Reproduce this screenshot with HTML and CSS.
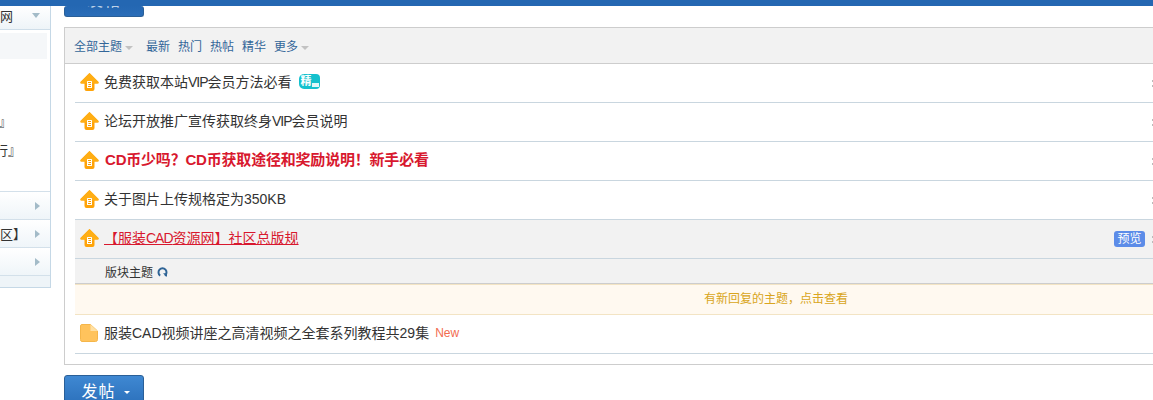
FILE: index.html
```html
<!DOCTYPE html>
<html lang="en">
<head>
  <meta charset="UTF-8">
  <title>服装CAD资源网</title>
  <link rel="stylesheet" href="styles.css">
</head>
<body>
  <svg class="defs" width="0" height="0">
    <symbol id="arrow" viewBox="0 0 19 18">
      <path d="M9.5 0 L18.5 9 Q19 10.5 17.5 10.5 L14.5 10.5 L14.5 16 Q14.5 18 12.5 18 L6.5 18 Q4.5 18 4.5 16 L4.5 10.5 L1.5 10.5 Q0 10.5 0.5 9 Z" fill="#ffa308"/>
      <path d="M9.5 0 L18.5 9 Q19 10.5 17.5 10.5 L1.5 10.5 Q0 10.5 0.5 9 Z" fill="#ffae14"/>
      <rect x="7" y="8" width="5" height="7" rx="0.5" fill="#fff"/>
      <path d="M8 9.5 H11 M8.5 11.5 H11 M8 13.5 H11" fill="none" stroke="#f59a00" stroke-width="1"/>
    </symbol>
  </svg>

  <div class="topbar"></div>

  <div class="page">
    <div class="sidebar">
      <div class="side-head"><span>网</span><i class="tri-down"></i></div>
      <div class="side-active"></div>
      <div class="side-links">
        <div class="side-link">』</div>
        <div class="side-link side-cut">行』</div>
      </div>
      <div class="side-group"><span></span><i class="tri-right"></i></div>
      <div class="side-group"><span>区】</span><i class="tri-right"></i></div>
      <div class="side-group"><span></span><i class="tri-right"></i></div>
      <div class="side-end"></div>
    </div>

    <div class="main">
      <a class="post-btn post-btn-top"><span>发帖</span></a>

      <div class="panel">
        <div class="filter">
          <div class="filter-links">
            <a class="first">全部主题<i class="tri-grey"></i></a>
            <a>最新</a>
            <a>热门</a>
            <a>热帖</a>
            <a>精华</a>
            <a>更多<i class="tri-grey"></i></a>
          </div>
          <label class="new-check"><i class="checkbox"></i>新窗</label>
        </div>

        <div class="thread">
          <svg class="icon"><use href="#arrow"/></svg>
          <a class="title">免费获取本站<span class="tight">VIP</span>会员方法必看</a>
          <span class="digest"><b>精</b><em></em></span>
          <span class="dots"></span>
        </div>
        <div class="thread">
          <svg class="icon"><use href="#arrow"/></svg>
          <a class="title">论坛开放推广宣传获取终身<span class="tight">VIP</span>会员说明</a>
          <span class="dots"></span>
        </div>
        <div class="thread">
          <svg class="icon"><use href="#arrow"/></svg>
          <a class="title red-bold">CD币少吗？CD币获取途径和奖励说明！新手必看</a>
          <span class="dots"></span>
        </div>
        <div class="thread">
          <svg class="icon"><use href="#arrow"/></svg>
          <a class="title">关于图片上传规格定为350KB</a>
          <span class="dots"></span>
        </div>
        <div class="thread thread-hover">
          <svg class="icon"><use href="#arrow"/></svg>
          <a class="title red-line">【服装<span class="tight">CAD</span>资源网】社区总版规</a>
          <span class="preview">预览</span>
          <span class="dots"></span>
        </div>

        <div class="sub-head">
          <span>版块主题</span>
          <svg class="refresh" viewBox="0 0 11 11">
            <path d="M3.2 9.6 A4 4 0 1 1 7.8 9.6" fill="none" stroke="#2f6496" stroke-width="2"/>
            <path d="M6 7.2 L10 7.2 L10 11 Z" fill="#2f6496"/>
          </svg>
        </div>
        <div class="notice">有新回复的主题，点击查看</div>

        <div class="thread">
          <svg class="icon file" viewBox="0 0 18 18">
            <path d="M2 0.5 H10.5 L17.5 7 V15.5 Q17.5 17.5 15.5 17.5 H2 Q0.5 17.5 0.5 15.5 V2 Q0.5 0.5 2 0.5 Z" fill="#ffc35c" stroke="#f5b64a"/>
            <path d="M10.5 0.5 L17.5 7 H10.5 Z" fill="#ffe0a3"/>
          </svg>
          <a class="title">服装CAD视频讲座之高清视频之全套系列教程共29集</a>
          <span class="new-tag">New</span>
        </div>
      </div>

      <a class="post-btn"><span class="btn-label">发帖</span><i class="tri-white"></i></a>
    </div>
  </div>
</body>
</html>
```

FILE: styles.css
```css
html, body {
  margin: 0;
  padding: 0;
  height: 400px;
  overflow: hidden;
  background: #fff;
}

body {
  font-family: "Liberation Sans", "Noto Sans CJK SC", sans-serif;
  font-size: 14px;
  color: #333;
}

.defs {
  position: absolute;
}

.topbar {
  height: 6px;
  background: #2467b2;
}

.page {
  display: flex;
  align-items: flex-start;
}

/* left column, cut off by the window */
.sidebar {
  width: 50px;
  flex: none;
  border-right: 1px solid #c5d8e6;
  font-size: 13px;
}

.side-head {
  height: 19px;
  padding: 0 10px 4px 0;
  display: flex;
  align-items: center;
  justify-content: space-between;
  background: linear-gradient(#fff, #eef4f8);
  border-bottom: 1px solid #cfdee9;
}

.side-active {
  height: 26px;
  width: 47px;
  margin-top: 3px;
  background: #f5f7f9;
}

.side-links {
  height: 132px;
  padding-top: 1px;
  box-sizing: border-box;
}

.side-link {
  height: 27px;
  line-height: 27px;
  font-size: 12px;
  color: #333;
}

.side-link:first-child {
  margin-top: 50px;
  margin-left: -1px;
}

.side-cut {
  margin-left: -5px;
  font-size: 13px;
}

.side-group {
  height: 27px;
  display: flex;
  align-items: center;
  justify-content: space-between;
  padding-right: 10px;
  background: linear-gradient(#fff, #eff5f9);
  border-top: 1px solid #d3e0ea;
  font-size: 13px;
}

.side-end {
  height: 11px;
  background: #eef4f8;
  border-top: 1px solid #d3e0ea;
  border-bottom: 1px solid #c5d8e6;
}

.tri-down {
  width: 0;
  height: 0;
  border: 4px solid transparent;
  border-top: 5px solid #a3bbc8;
  border-bottom: 0;
}

.tri-right {
  margin-left: auto;
  width: 0;
  height: 0;
  border: 4px solid transparent;
  border-left: 5px solid #a3bbc8;
  border-right: 0;
}

/* right column */
.main {
  margin-left: 13px;
  width: 1200px;
  flex: none;
}

.post-btn {
  display: block;
  width: 78px;
  height: 40px;
  line-height: 32px;
  text-align: center;
  font-size: 16px;
  letter-spacing: 1px;
  color: #fff;
  background: linear-gradient(#3f88d2, #2467b2);
  border: 1px solid #2a5f97;
  border-radius: 3px;
}

.btn-label {
  margin-left: 3px;
}

/* the bar above the list is scrolled almost out of view */
.post-btn-top {
  height: 10px;
  border-top: 0;
  background: linear-gradient(#2467b2, #2a6db8);
  overflow: hidden;
}

.post-btn-top span {
  display: block;
  margin-top: -21px;
  opacity: 0.7;
}

.tri-white {
  display: inline-block;
  vertical-align: middle;
  margin-left: 8px;
  width: 0;
  height: 0;
  border: 3px solid transparent;
  border-top: 3px solid #fff;
  border-bottom: 0;
}

.panel {
  margin-top: 10px;
  margin-bottom: 10px;
  border: 1px solid #cdcdcd;
  padding: 0 0 10px;
  height: 326px;
}

.filter {
  height: 35px;
  display: flex;
  align-items: center;
  justify-content: space-between;
  padding: 0 10px 0 9px;
  background: #f2f2f2;
  border-bottom: 1px solid #cdcdcd;
  font-size: 12px;
  color: #369;
}

.filter-links {
  display: flex;
  gap: 8px;
}

.filter-links .first {
  margin-right: 5px;
}

.tri-grey {
  display: inline-block;
  vertical-align: middle;
  margin-left: 3px;
  width: 0;
  height: 0;
  border: 4px solid transparent;
  border-top: 4px solid #c2c2c2;
  border-bottom: 0;
}

.new-check {
  display: flex;
  align-items: center;
  gap: 3px;
  margin-right: 27px;
  white-space: nowrap;
}

.checkbox {
  width: 9px;
  height: 9px;
  border: 1px solid #c8c8c8;
  border-radius: 2px;
  background: #fff;
}

.thread {
  height: 35px;
  margin-left: 10px;
  padding: 0 0 3px 5px;
  display: flex;
  align-items: center;
  border-bottom: 1px solid #c9d6df;
}

.thread-hover {
  background: #f2f2f2;
}

.icon {
  width: 19px;
  height: 18px;
  flex: none;
  margin-right: 5px;
}

.icon.file {
  width: 18px;
  margin-right: 6px;
}

.title {
  margin-bottom: 2px;
  white-space: nowrap;
}

.tight {
  letter-spacing: -1px;
}

.red-bold {
  margin-left: 1px;
  font-size: 15px;
  letter-spacing: -0.2px;
  color: #d8182e;
  font-weight: bold;
}

.red-line {
  color: #d8182e;
  text-decoration: underline;
}

.digest {
  display: inline-flex;
  align-items: flex-end;
  margin-left: 7px;
  width: 21px;
  height: 15px;
  background: #14c1cd;
  border-radius: 5px 4px 4px 5px;
  font-size: 11px;
  line-height: 15px;
  color: #fff;
  overflow: hidden;
}

.digest b {
  font-weight: bold;
  padding-left: 2px;
}

.digest em {
  width: 7px;
  height: 4px;
  margin-bottom: 2px;
  background: #dff7f9;
}

.dots {
  position: absolute;
  left: 1152px;
  margin-top: 3px;
  width: 1px;
  height: 7px;
  border-top: 2px solid #bbb;
  border-bottom: 2px solid #bbb;
  box-sizing: border-box;
}

.preview {
  position: absolute;
  left: 1114px;
  margin-top: 3px;
  width: 31px;
  height: 16px;
  line-height: 16px;
  text-align: center;
  font-size: 12px;
  color: #fff;
  background: #5c8ce8;
  border-radius: 3px;
}

.sub-head {
  height: 24px;
  margin-left: 10px;
  display: flex;
  align-items: center;
  gap: 4px;
  padding-left: 30px;
  font-size: 12px;
  background: #f2f2f2;
  border-bottom: 1px solid #cdcdcd;
}

.refresh {
  width: 11px;
  height: 11px;
}

.notice {
  height: 29px;
  margin-left: 10px;
  padding-left: 629px;
  line-height: 29px;
  font-size: 12px;
  color: #d9a520;
  background: #fff9f0;
  border-top: 1px solid #f3e4c4;
  border-bottom: 1px solid #f3e4c4;
}

.new-tag {
  margin-left: 6px;
  font-size: 12px;
  color: #f26c4f;
}
```
